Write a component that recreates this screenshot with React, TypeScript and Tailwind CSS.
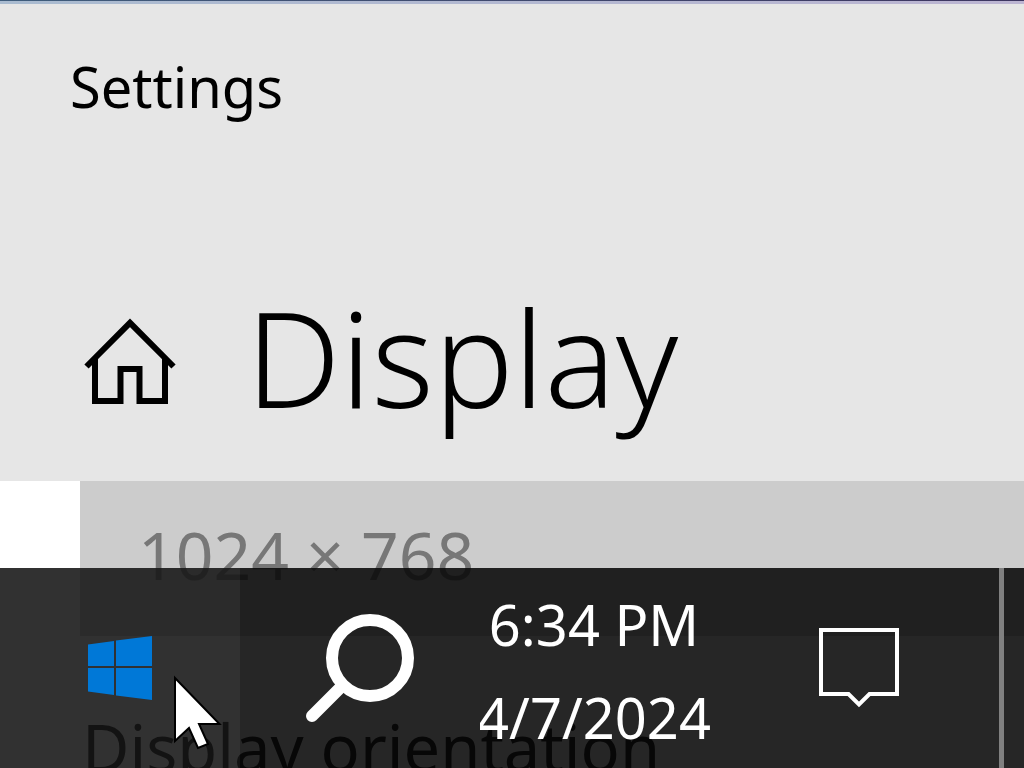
import type { ReactNode } from 'react';

function HomeIcon() {
    return (
        <svg
            viewBox="84 319 92 86"
            className="h-[86px] w-[92px]"
            fill="none"
            stroke="currentColor"
            strokeWidth="6"
        >
            <path d="M86.5 367.5 L130 323.8 L173.5 367.5" />
            <path d="M95 359 V402 H120.5 V370 H139.5 V402 H165 V359" />
        </svg>
    );
}

function WindowsLogo() {
    return (
        <svg viewBox="0 0 64 64" className="size-16" fill="#0078d7">
            <path d="M0 8.5 L26 5 V30 H0 Z" />
            <path d="M28 4.5 L64 0 V30 H28 Z" />
            <path d="M0 32 H26 V59 L0 55.5 Z" />
            <path d="M28 32 H64 V64 L28 59.5 Z" />
        </svg>
    );
}

function SearchIcon() {
    return (
        <svg
            viewBox="306 614 108 108"
            className="size-[108px]"
            fill="none"
            stroke="white"
            strokeLinecap="round"
        >
            <circle cx="370" cy="658" r="38" strokeWidth="12" />
            <path d="M342 686 L312 716" strokeWidth="12" />
        </svg>
    );
}

function NotificationIcon() {
    return (
        <svg
            viewBox="0 0 80 80"
            className="size-20"
            fill="none"
            stroke="white"
            strokeWidth="4"
        >
            <path d="M2 2 H78 V66 H50.5 L40 76.5 L29.5 66 H2 Z" />
        </svg>
    );
}

function Cursor() {
    return (
        <svg
            viewBox="0 0 52 78"
            className="pointer-events-none absolute top-[106px] left-[172px] h-[78px] w-[52px]"
            fill="white"
            stroke="black"
            strokeWidth="2"
        >
            <path d="M3 4 V67 L17 54 L26 74 L36 70 L27 50 H47.5 Z" />
        </svg>
    );
}

function TaskbarButton({
    label,
    className,
    children,
}: {
    label: string;
    className: string;
    children: ReactNode;
}) {
    return (
        <button
            type="button"
            aria-label={label}
            className={`flex items-center justify-center overflow-hidden ${className}`}
        >
            {children}
        </button>
    );
}

function Taskbar() {
    return (
        <footer className="absolute inset-x-0 bottom-0 flex h-[200px] bg-[#080808]/88 text-white">
            <TaskbarButton label="Start" className="w-60 shrink-0 bg-white/5">
                <WindowsLogo />
            </TaskbarButton>
            <TaskbarButton label="Search" className="w-60 shrink-0">
                <SearchIcon />
            </TaskbarButton>
            <button
                type="button"
                className="flex w-60 shrink-0 flex-col items-center justify-center overflow-hidden pt-1.5 pr-3 text-[56px] leading-[93px]"
            >
                <span>6:34 PM</span>
                <span>4/7/2024</span>
            </button>
            <TaskbarButton label="Notifications" className="flex-1 pr-0.5">
                <NotificationIcon />
            </TaskbarButton>
            <button
                type="button"
                aria-label="Show desktop"
                className="w-[25px] border-l-5 border-[#808080]"
            />
            <Cursor />
        </footer>
    );
}

export default function App() {
    return (
        <div className="relative flex h-screen flex-col overflow-hidden bg-white font-['Noto_Sans','Open_Sans',sans-serif] text-black">
            <header className="shrink-0 bg-[#e6e6e6] pb-8">
                <div className="h-px bg-linear-to-r from-[#3f5d7c] to-[#3d3560]" />
                <div className="h-[3px] bg-linear-to-r from-[#a9bbd0] to-[#bcb5d2]" />
                <p className="px-[70px] pt-10 text-[56px] leading-[84px]">
                    Settings
                </p>
                <div className="flex items-center gap-[70px] px-[84px] pt-[142px]">
                    <button type="button" aria-label="Home" className="pt-0.5">
                        <HomeIcon />
                    </button>
                    <h1 className="pb-1.5 text-[133px] leading-[173px] font-[350]">
                        Display
                    </h1>
                </div>
            </header>
            <main className="shrink-0 pl-20">
                <select
                    disabled
                    aria-label="Display resolution"
                    className="block h-[155px] w-full appearance-none bg-[#cccccc] px-[58px] pb-2 text-[66px] text-[#777777] opacity-100"
                >
                    <option>1024 × 768</option>
                </select>
                <h2 className="pt-[66px] pl-0.5 text-[65px] leading-[90px]">
                    Display orientation
                </h2>
            </main>
            <Taskbar />
        </div>
    );
}
